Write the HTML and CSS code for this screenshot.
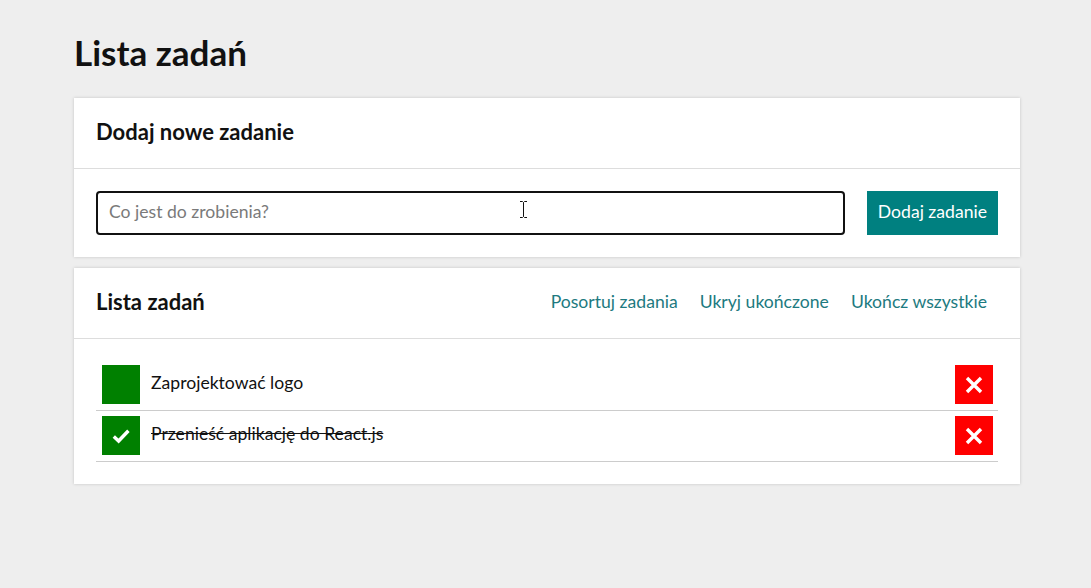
FILE: index.html
```html
<!DOCTYPE html>
<html lang="pl">
<head>
<meta charset="utf-8">
<title>Lista zadań</title>
<link rel="stylesheet" href="styles.css">
</head>
<body>
<main class="page">
  <h1 class="title">Lista zadań</h1>

  <section class="card">
    <header class="card-header">
      <h2 class="card-title">Dodaj nowe zadanie</h2>
    </header>
    <div class="card-body form-row">
      <div class="input-wrap">
        <input class="task-input" type="text" placeholder="Co jest do zrobienia?">
        <svg class="ibeam" viewBox="0 0 9 17" width="9" height="17"><path d="M1 0.5 H3.5 L4.5 1.5 L5.5 0.5 H8 M4.5 1.5 V15.5 M1 16.5 H3.5 L4.5 15.5 L5.5 16.5 H8" stroke="#111" stroke-width="1" fill="none"/></svg>
      </div>
      <button class="add-button">Dodaj zadanie</button>
    </div>
  </section>

  <section class="card">
    <header class="card-header">
      <h2 class="card-title">Lista zadań</h2>
      <nav class="actions">
        <button class="link-button">Posortuj zadania</button>
        <button class="link-button">Ukryj ukończone</button>
        <button class="link-button">Ukończ wszystkie</button>
      </nav>
    </header>
    <div class="card-body list-body">
      <ul class="tasks">
        <li class="task">
          <button class="check"></button>
          <span class="task-text">Zaprojektować logo</span>
          <button class="remove">
            <svg viewBox="0 0 18 18" width="18" height="18"><path d="M2 2 L16 16 M16 2 L2 16" stroke="#fff" stroke-width="3.4" fill="none"/></svg>
          </button>
        </li>
        <li class="task done">
          <button class="check">
            <svg viewBox="0 0 18 18" width="18" height="18"><path d="M1.8 9.6 L6.6 14 L16.4 3.8" stroke="#fff" stroke-width="3.4" fill="none"/></svg>
          </button>
          <span class="task-text">Przenieść aplikację do React.js</span>
          <button class="remove">
            <svg viewBox="0 0 18 18" width="18" height="18"><path d="M2 2 L16 16 M16 2 L2 16" stroke="#fff" stroke-width="3.4" fill="none"/></svg>
          </button>
        </li>
      </ul>
    </div>
  </section>
</main>
</body>
</html>
```

FILE: styles.css
```css
* { box-sizing: border-box; }

body {
  margin: 0;
  background: #eeeeee;
  font-family: Lato, "Open Sans", sans-serif;
  color: #111;
}

.page {
  padding: 26px 71px 40px 74px;
}

.title {
  margin: 0 0 20px 0;
  font-size: 35px;
  font-weight: 700;
  line-height: 52px;
}

.card {
  background: #fff;
  box-shadow: 0 0 3px rgba(0, 0, 0, 0.18);
  margin-bottom: 11px;
}

.card-header {
  height: 71px;
  border-bottom: 1px solid #dddddd;
  padding: 0 22px 4px 22px;
  display: flex;
  align-items: center;
  justify-content: space-between;
}

.card-title {
  margin: 0;
  font-size: 22px;
  font-weight: 700;
}

.card-body {
  padding: 22px;
}

.list-body {
  padding-top: 21px;
}

.form-row {
  display: flex;
  gap: 22px;
}

.input-wrap {
  flex: 1;
  position: relative;
  display: flex;
}

.task-input {
  flex: 1;
  height: 44px;
  border: 2px solid #111;
  border-radius: 4px;
  padding: 0 11px 4px;
  font-family: inherit;
  font-size: 17.6px;
  color: #111;
  outline: none;
}

.task-input::placeholder {
  color: #7a7a7a;
}

.ibeam {
  position: absolute;
  left: 423px;
  top: 10px;
}

.add-button {
  height: 44px;
  padding: 0 11px 4px;
  border: 0;
  background: #008080;
  color: #fff;
  font-family: inherit;
  font-size: 17.6px;
}

.actions {
  display: flex;
}

.link-button {
  border: 0;
  background: none;
  padding: 0 11px;
  color: #1d7a80;
  font-family: inherit;
  font-size: 17.6px;
}

.tasks {
  list-style: none;
  margin: 0;
  padding: 0;
}

.task {
  display: flex;
  align-items: center;
  min-height: 51px;
  padding: 0 5px 1px 6px;
  border-bottom: 1px solid #cccccc;
}

.check,
.remove {
  width: 38px;
  height: 39px;
  border: 0;
  padding: 0;
  display: flex;
  align-items: center;
  justify-content: center;
  flex: none;
}

.check { background: #008000; }
.remove { background: #ff0000; }

.task-text {
  flex: 1;
  margin-left: 11px;
  padding-bottom: 4px;
  font-size: 17.6px;
  color: #111;
}

.done .task-text {
  text-decoration: line-through;
}
```
